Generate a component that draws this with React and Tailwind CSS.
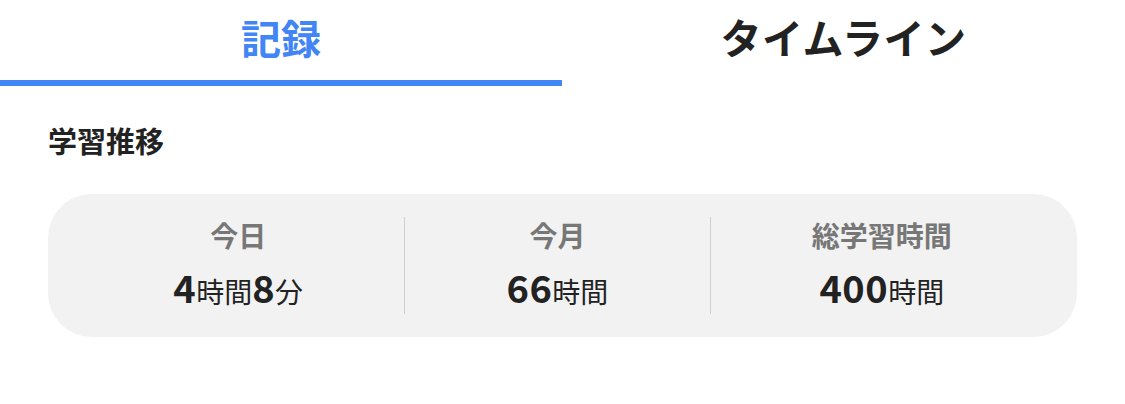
export default function App() {
  const stats = [
    { label: "今日", value: [["4", true], ["時間", false], ["8", true], ["分", false]] },
    { label: "今月", value: [["66", true], ["時間", false]] },
    { label: "総学習時間", value: [["400", true], ["時間", false]] },
  ];

  return (
    <div
      className="w-[1125px] h-[404px] bg-white text-[#222]"
      style={{ fontFamily: '"Noto Sans CJK JP", "Noto Sans", sans-serif' }}
    >
      {/* Tabs */}
      <div className="flex">
        <div className="w-[562px] h-[86px] flex items-center justify-center border-b-[6px] border-[#4285f4] text-[#4285f4] text-[40px] font-bold pb-[6px]">
          記録
        </div>
        <div className="flex-1 h-[86px] flex items-center justify-center text-[41px] font-bold tracking-[0.5px] pb-[12px]">
          タイムライン
        </div>
      </div>

      <div className="px-12">
        <h2 className="mt-[38px] text-[29px] font-bold leading-[32px]">学習推移</h2>

        <div className="mt-[38px] h-[143px] rounded-[44px] bg-[#f2f2f2] px-6 flex items-center">
          {stats.map((s, i) => (
            <div key={s.label} className="contents">
              {i > 0 && <div className="w-px h-[97px] bg-[#cfcfcf]" />}
              <div className="flex-auto flex flex-col items-center">
                <div className="text-[28px] font-bold text-[#777] leading-[36px] -mt-[4px]">{s.label}</div>
                <div className="mt-[14px] flex items-baseline leading-[40px]">
                  {s.value.map(([t, bold], j) => (
                    <span
                      key={j}
                      className={bold ? "text-[38px] font-bold tracking-[0.5px]" : "text-[28px]"}
                    >
                      {t}
                    </span>
                  ))}
                </div>
              </div>
            </div>
          ))}
        </div>
      </div>
    </div>
  );
}
